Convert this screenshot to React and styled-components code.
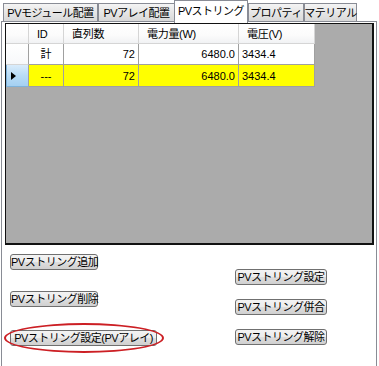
import React from "react";
import styled, { createGlobalStyle } from "styled-components";

const GlobalStyle = createGlobalStyle`
  html, body {
    margin: 0;
    padding: 0;
    background: #fff;
  }
  body {
    font-family: "Liberation Sans", "Noto Sans CJK JP", sans-serif;
  }
`;

const Window = styled.div`
  width: 379px;
  height: 366px;
  overflow: hidden;
  background: #fff;
  font-size: 11px;
  color: #000;
`;

const TabBar = styled.div`
  display: flex;
  align-items: flex-start;
  height: 22px;
  padding-left: 3px;
  position: relative;
  z-index: 1;
`;

const Tab = styled.div`
  box-sizing: border-box;
  width: ${(p) => p.$w}px;
  height: ${(p) => (p.$active ? 23 : 19)}px;
  margin-top: ${(p) => (p.$active ? 0 : 3)}px;
  margin-left: ${(p) => p.$ml || 0}px;
  display: flex;
  align-items: center;
  justify-content: center;
  border: 1px solid #898c95;
  border-bottom: ${(p) => (p.$active ? "none" : "1px solid #898c95")};
  background: ${(p) =>
    p.$active ? "#fff" : "linear-gradient(#f4f4f4, #e6e6e6 50%, #d9d9d9)"};
  letter-spacing: -0.5px;
  white-space: nowrap;
  line-height: 14px;
  padding-bottom: ${(p) => (p.$active ? 3 : 0)}px;
  position: relative;
  z-index: ${(p) => (p.$active ? 2 : 1)};
`;

const Panel = styled.div`
  box-sizing: border-box;
  height: 345px;
  margin: -1px 2px 0 1px;
  border: 1px solid #898c95;
  border-bottom: none;
  padding: 0 2px 0 3px;
`;

const Grid = styled.div`
  box-sizing: border-box;
  height: 222px;
  margin-top: 1px;
  background: #ababab;
  border: 1px solid #111;
  border-right-width: 2px;
  border-bottom-width: 2px;
`;

const Table = styled.div`
  display: grid;
  grid-template-columns: 23px 35px 75px 100px 76px;
  grid-template-rows: 20px 21px 22px;
  width: max-content;
`;

const Cell = styled.div`
  box-sizing: border-box;
  display: flex;
  align-items: center;
  justify-content: ${(p) => p.$align || "flex-start"};
  padding: 0 ${(p) => (p.$align === "flex-end" ? 3 : 0)}px 0
    ${(p) => (p.$align === "flex-end" || p.$align === "center" ? 0 : 3)}px;
  background: ${(p) => (p.$selected ? "#ffff00" : "#fff")};
  border-right: 1px solid #a0a0a0;
  border-bottom: 1px solid #a0a0a0;
  white-space: nowrap;
  line-height: 14px;
`;

const HeaderCell = styled.div`
  box-sizing: border-box;
  display: flex;
  align-items: center;
  padding-left: 8px;
  background: linear-gradient(#ffffff, #fbfbfb 60%, #f1f2f4);
  border-right: 1px solid #d5d5d5;
  border-bottom: 1px solid #d5d5d5;
  letter-spacing: -0.3px;
  white-space: nowrap;
  line-height: 14px;
`;

const RowHeader = styled.div`
  box-sizing: border-box;
  display: flex;
  align-items: center;
  padding-left: 4px;
  background: ${(p) =>
    p.$current
      ? "linear-gradient(#d9ecfb, #b9dcf6 50%, #a4d0f2)"
      : "linear-gradient(#ffffff, #f7f8fa)"};
  border-right: 1px solid #a0a0a0;
  border-bottom: 1px solid ${(p) => (p.$current ? "#7fb2da" : "#d5d5d5")};
  border-left: ${(p) => (p.$current ? "1px solid #7fb2da" : "none")};
`;

const Pointer = styled.span`
  width: 0;
  height: 0;
  border-left: 5px solid #000;
  border-top: 4px solid transparent;
  border-bottom: 4px solid transparent;
`;

const Controls = styled.div`
  display: grid;
  grid-template-columns: 225px 1fr;
  padding-left: 5px;
`;

const Column = styled.div`
  display: flex;
  flex-direction: column;
  align-items: flex-start;
`;

const Button = styled.button`
  box-sizing: border-box;
  height: 16px;
  width: ${(p) => p.$w}px;
  margin-top: ${(p) => p.$mt}px;
  padding: 0;
  border: 1px solid #707070;
  border-radius: 3px;
  background: linear-gradient(#f3f3f3, #ececec 50%, #dedede 51%, #d0d0d0);
  font-family: inherit;
  font-size: 11px;
  letter-spacing: -0.5px;
  line-height: 14px;
  color: #000;
  white-space: nowrap;
`;

const Highlight = styled.div`
  position: relative;
  margin-top: ${(p) => p.$mt}px;

  &::after {
    content: "";
    position: absolute;
    top: -7px;
    bottom: -7px;
    left: -6px;
    right: -7px;
    border: 2px solid #cc1f24;
    border-radius: 50%;
    pointer-events: none;
  }
`;

const tabs = [
  { label: "PVモジュール配置", w: 95 },
  { label: "PVアレイ配置", w: 77 },
  { label: "PVストリング", w: 74, ml: -1, active: true },
  { label: "プロパティ", w: 56 },
  { label: "マテリアル", w: 53 },
];

const rows = [
  { id: "計", count: "72", power: "6480.0", volt: "3434.4" },
  { id: "---", count: "72", power: "6480.0", volt: "3434.4", current: true },
];

export default function App() {
  return (
    <>
      <GlobalStyle />
      <Window>
        <TabBar>
          {tabs.map((t) => (
            <Tab key={t.label} $w={t.w} $ml={t.ml} $active={t.active}>
              {t.label}
            </Tab>
          ))}
        </TabBar>
        <Panel>
          <Grid>
            <Table>
              <HeaderCell />
              <HeaderCell>ID</HeaderCell>
              <HeaderCell>直列数</HeaderCell>
              <HeaderCell>電力量(W)</HeaderCell>
              <HeaderCell>電圧(V)</HeaderCell>
              {rows.map((r) => (
                <React.Fragment key={r.id}>
                  <RowHeader $current={r.current}>
                    {r.current && <Pointer />}
                  </RowHeader>
                  <Cell $align="center" $selected={r.current}>
                    {r.id}
                  </Cell>
                  <Cell $align="flex-end" $selected={r.current}>
                    {r.count}
                  </Cell>
                  <Cell $align="flex-end" $selected={r.current}>
                    {r.power}
                  </Cell>
                  <Cell $selected={r.current}>{r.volt}</Cell>
                </React.Fragment>
              ))}
            </Table>
          </Grid>
          <Controls>
            <Column>
              <Button $w={88} $mt={9}>PVストリング追加</Button>
              <Button $w={88} $mt={21}>PVストリング削除</Button>
              <Highlight $mt={23}>
                <Button $w={147} $mt={0}>PVストリング設定(PVアレイ)</Button>
              </Highlight>
            </Column>
            <Column>
              <Button $w={92} $mt={24}>PVストリング設定</Button>
              <Button $w={92} $mt={14}>PVストリング併合</Button>
              <Button $w={92} $mt={14}>PVストリング解除</Button>
            </Column>
          </Controls>
        </Panel>
      </Window>
    </>
  );
}
